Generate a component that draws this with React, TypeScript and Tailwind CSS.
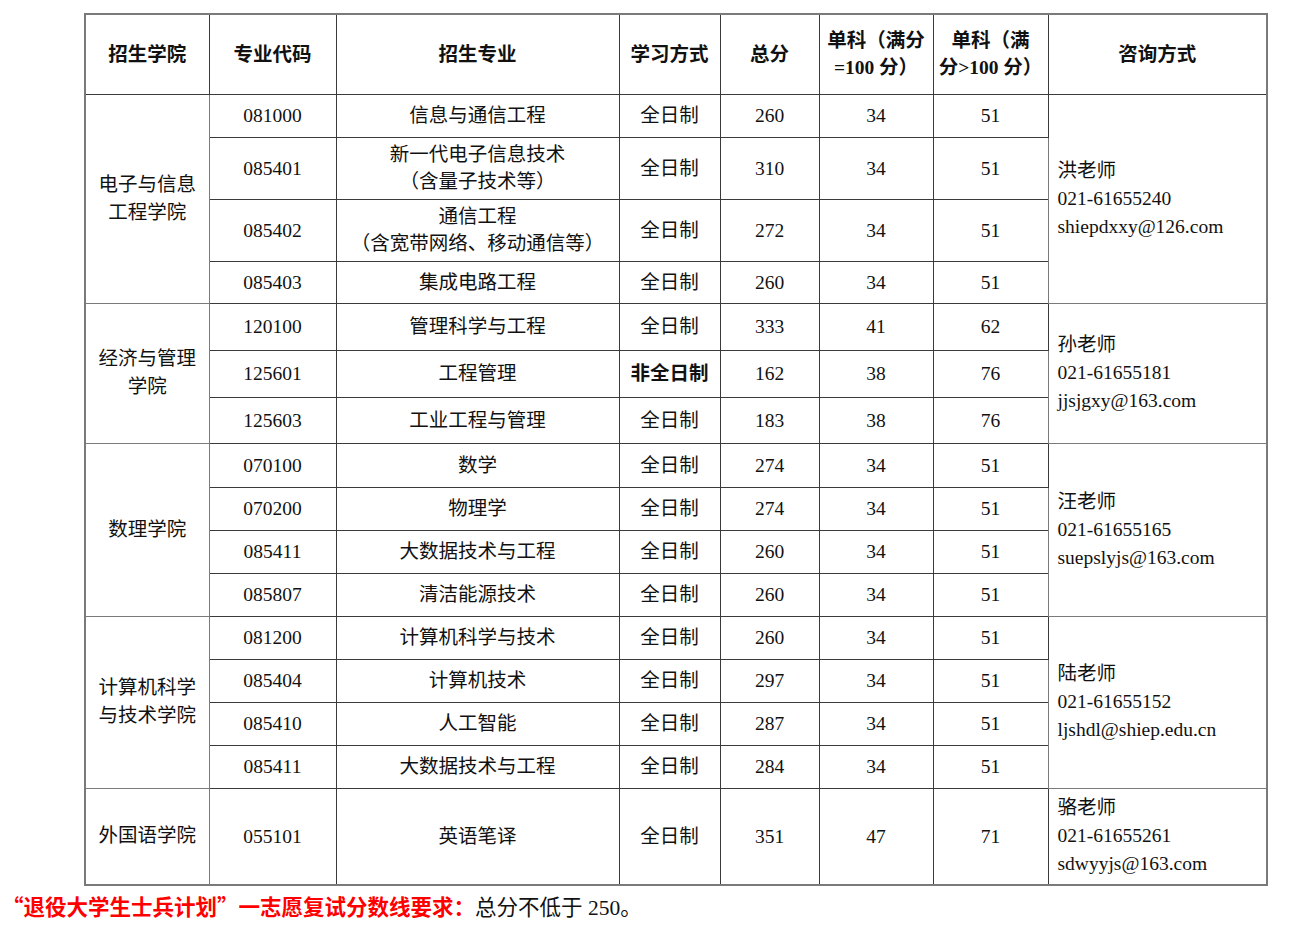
const font = "font-['Liberation_Serif','Noto_Sans_CJK_SC',serif]";

type Row = {
  code: string;
  major: string[];
  mode: string;
  total: string;
  s1: string;
  s2: string;
  h: string;
};

type Group = {
  college: string[];
  contact: string[];
  rows: Row[];
};

const groups: Group[] = [
  {
    college: ["电子与信息", "工程学院"],
    contact: ["洪老师", "021-61655240", "shiepdxxy@126.com"],
    rows: [
      { code: "081000", major: ["信息与通信工程"], mode: "全日制", total: "260", s1: "34", s2: "51", h: "h-[43px]" },
      { code: "085401", major: ["新一代电子信息技术", "（含量子技术等）"], mode: "全日制", total: "310", s1: "34", s2: "51", h: "h-[62px]" },
      { code: "085402", major: ["通信工程", "（含宽带网络、移动通信等）"], mode: "全日制", total: "272", s1: "34", s2: "51", h: "h-[62px]" },
      { code: "085403", major: ["集成电路工程"], mode: "全日制", total: "260", s1: "34", s2: "51", h: "h-[42px]" },
    ],
  },
  {
    college: ["经济与管理", "学院"],
    contact: ["孙老师", "021-61655181", "jjsjgxy@163.com"],
    rows: [
      { code: "120100", major: ["管理科学与工程"], mode: "全日制", total: "333", s1: "41", s2: "62", h: "h-[47px]" },
      { code: "125601", major: ["工程管理"], mode: "非全日制", total: "162", s1: "38", s2: "76", h: "h-[47px]" },
      { code: "125603", major: ["工业工程与管理"], mode: "全日制", total: "183", s1: "38", s2: "76", h: "h-[46px]" },
    ],
  },
  {
    college: ["数理学院"],
    contact: ["汪老师", "021-61655165", "suepslyjs@163.com"],
    rows: [
      { code: "070100", major: ["数学"], mode: "全日制", total: "274", s1: "34", s2: "51", h: "h-[44px]" },
      { code: "070200", major: ["物理学"], mode: "全日制", total: "274", s1: "34", s2: "51", h: "h-[43px]" },
      { code: "085411", major: ["大数据技术与工程"], mode: "全日制", total: "260", s1: "34", s2: "51", h: "h-[43px]" },
      { code: "085807", major: ["清洁能源技术"], mode: "全日制", total: "260", s1: "34", s2: "51", h: "h-[43px]" },
    ],
  },
  {
    college: ["计算机科学", "与技术学院"],
    contact: ["陆老师", "021-61655152", "ljshdl@shiep.edu.cn"],
    rows: [
      { code: "081200", major: ["计算机科学与技术"], mode: "全日制", total: "260", s1: "34", s2: "51", h: "h-[43px]" },
      { code: "085404", major: ["计算机技术"], mode: "全日制", total: "297", s1: "34", s2: "51", h: "h-[43px]" },
      { code: "085410", major: ["人工智能"], mode: "全日制", total: "287", s1: "34", s2: "51", h: "h-[43px]" },
      { code: "085411", major: ["大数据技术与工程"], mode: "全日制", total: "284", s1: "34", s2: "51", h: "h-[43px]" },
    ],
  },
  {
    college: ["外国语学院"],
    contact: ["骆老师", "021-61655261", "sdwyyjs@163.com"],
    rows: [
      { code: "055101", major: ["英语笔译"], mode: "全日制", total: "351", s1: "47", s2: "71", h: "h-[97px]" },
    ],
  },
];

const cell = "border border-[#3a3a3a] text-center align-middle p-0";
const cjk = "font-['Noto_Sans_CJK_SC',sans-serif]";

export default function App() {
  return (
    <div className={`w-[1290px] h-[926px] bg-white text-[#111] text-[19.5px] ${font}`}>
      <div className="pt-[13px] pl-[84px]">
        <table className="w-[1182px] table-fixed border-collapse border-2 border-[#7a7a7a] leading-[27px]">
          <colgroup>
            <col className="w-[124px]" />
            <col className="w-[127px]" />
            <col className="w-[283px]" />
            <col className="w-[101px]" />
            <col className="w-[99px]" />
            <col className="w-[114px]" />
            <col className="w-[115px]" />
            <col className="w-[219px]" />
          </colgroup>
          <thead>
            <tr className="h-[80px] font-bold">
              <th className={cell}>招生学院</th>
              <th className={cell}>专业代码</th>
              <th className={cell}>招生专业</th>
              <th className={cell}>学习方式</th>
              <th className={cell}>总分</th>
              <th className={cell}>
                单科（满分
                <br />
                =100 分）
              </th>
              <th className={cell}>
                单科（满
                <br />
                分&gt;100 分）
              </th>
              <th className={cell}>咨询方式</th>
            </tr>
          </thead>
          <tbody>
            {groups.map((g) =>
              g.rows.map((r, i) => (
                <tr key={g.college.join() + r.code} className={r.h}>
                  {i === 0 && (
                    <td rowSpan={g.rows.length} className={`${cell} border-[#7a7a7a] leading-[28px]`}>
                      {g.college.map((c) => (
                        <div key={c}>{c}</div>
                      ))}
                    </td>
                  )}
                  <td className={cell}>{r.code}</td>
                  <td className={cell}>
                    {r.major.map((m) => (
                      <div key={m}>{m}</div>
                    ))}
                  </td>
                  <td className={`${cell} ${r.mode === "非全日制" ? "font-bold" : ""}`}>{r.mode}</td>
                  <td className={cell}>{r.total}</td>
                  <td className={cell}>{r.s1}</td>
                  <td className={cell}>{r.s2}</td>
                  {i === 0 && (
                    <td
                      rowSpan={g.rows.length}
                      className="border border-[#7a7a7a] text-left align-middle pl-[9px] leading-[28px]"
                    >
                      {g.contact.map((c) => (
                        <div key={c}>{c}</div>
                      ))}
                    </td>
                  )}
                </tr>
              ))
            )}
          </tbody>
        </table>
      </div>
      <div className="pl-[2px] pt-[6px] leading-[27px] text-[21.5px]">
        <span className="text-[#ff0000] font-bold">
          <span className={cjk}>“</span>退役大学生士兵计划<span className={cjk}>”</span>一志愿复试分数线要求：
        </span>
        <span>总分不低于 250。</span>
      </div>
    </div>
  );
}
